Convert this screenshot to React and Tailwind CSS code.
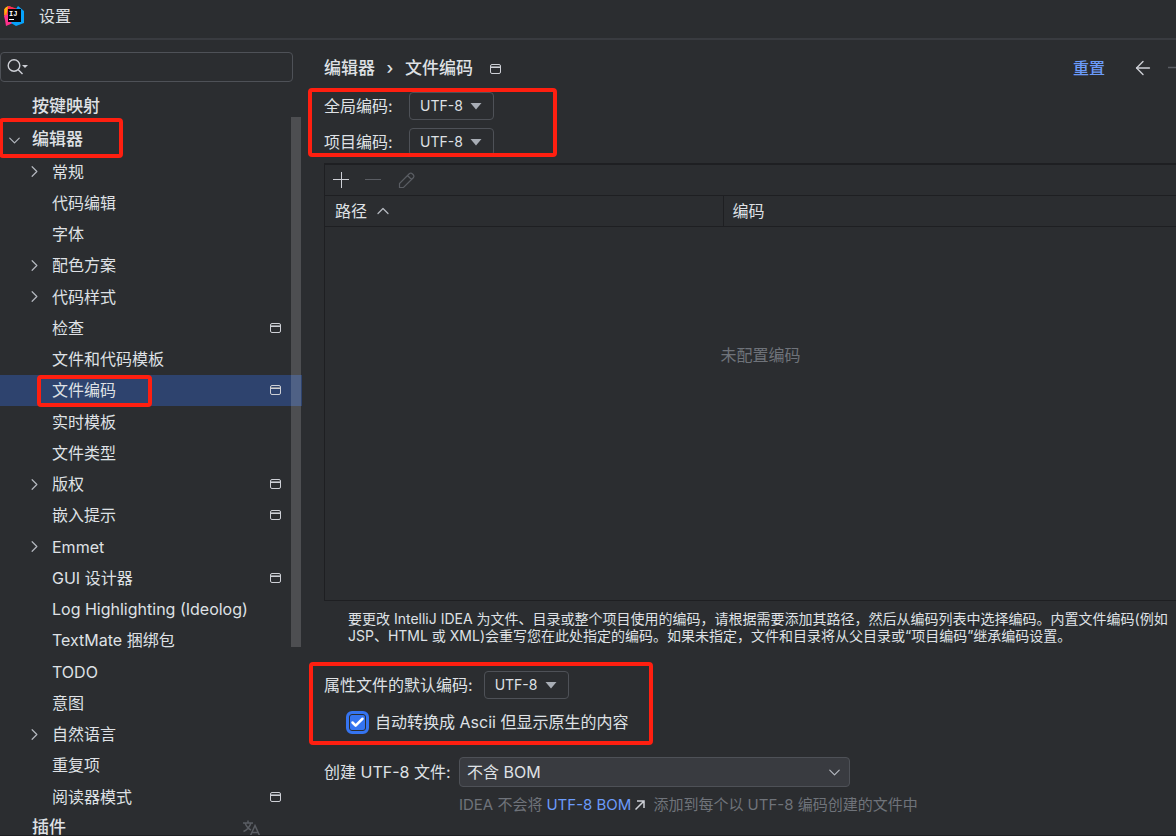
import { ArrowLeft, Check, ChevronDown, ChevronRight, ChevronUp } from 'lucide-react';

const editorItems = [
  { label: '常规', expandable: true },
  { label: '代码编辑' },
  { label: '字体' },
  { label: '配色方案', expandable: true },
  { label: '代码样式', expandable: true },
  { label: '检查', project: true },
  { label: '文件和代码模板' },
  { label: '文件编码', project: true, selected: true },
  { label: '实时模板' },
  { label: '文件类型' },
  { label: '版权', expandable: true, project: true },
  { label: '嵌入提示', project: true },
  { label: 'Emmet', expandable: true },
  { label: 'GUI 设计器', project: true },
  { label: 'Log Highlighting (Ideolog)' },
  { label: 'TextMate 捆绑包' },
  { label: 'TODO' },
  { label: '意图' },
  { label: '自然语言', expandable: true },
  { label: '重复项' },
  { label: '阅读器模式', project: true },
];

function IdeaLogo() {
  return (
    <svg width="20" height="20" viewBox="0 0 20 20" aria-hidden="true">
      <path d="M0 3 5 0 12 3 10 12 3 14 0 9Z" fill="#fc801d" />
      <path d="M4 0 14 3 13 8 4 10 2 5Z" fill="#fe2857" />
      <path d="M0 10 8 6 9 17 2 20 1 14Z" fill="#ff318c" />
      <path d="M12 3 14 0 20 5 20 17 12 20 7 17 13 9Z" fill="#07a2fb" />
      <path d="M1 2 4 0 3 6 1 8Z" fill="#fdb60d" />
      <rect x="4" y="3" width="13" height="13" fill="#070508" />
      <text x="5" y="10" fill="#fff" fontSize="7" fontWeight="700" fontFamily="Liberation Mono, monospace">IJ</text>
      <path d="M5 13.500H10" stroke="#fff" />
    </svg>
  );
}

function ProjectIcon() {
  return (
    <svg className="shrink-0" width="11" height="10" viewBox="0 0 11 10" fill="none" stroke="#ced0d6" aria-hidden="true">
      <rect x="0.5" y="0.5" width="10" height="9" rx="1.500" />
      <path d="M1 2.500H10" stroke="#8c8f94" />
      <path d="M1 3.500H10" />
    </svg>
  );
}

function Highlight({ className }) {
  return <div className={`pointer-events-none absolute z-10 rounded-sm border-4 border-[#ff1f10] ${className}`} />;
}

function TreeItem({ item }) {
  return (
    <li className={`relative flex h-[31px] items-center pl-[25px] pr-[21px] ${item.selected ? 'bg-[#2e436e]' : ''}`}>
      <span className="w-[27px] shrink-0">
        {item.expandable && <ChevronRight className="text-[#b4b8bf]" size={19} strokeWidth={1.5} />}
      </span>
      <a href="#" className="flex-1 whitespace-nowrap">{item.label}</a>
      {item.project && <ProjectIcon />}
      {item.selected && <Highlight className="left-[37px] top-0 h-8 w-[115px]" />}
    </li>
  );
}

function Sidebar() {
  return (
    <aside className="flex w-[302px] shrink-0 flex-col pt-3">
      <label className="mr-[9px] flex h-[30px] items-center rounded-sm border border-[#4e5157] pl-[6px]">
        <svg width="22" height="18" viewBox="0 0 22 18" fill="none" stroke="#ced0d6" strokeWidth="1.400" aria-hidden="true">
          <circle cx="7" cy="7.500" r="5.800" />
          <path d="M11 11.500 15.500 16" />
          <path d="M15 7H21L18 10Z" fill="#ced0d6" stroke="none" />
        </svg>
        <input type="text" aria-label="搜索设置" className="min-w-0 flex-1 bg-transparent outline-none" />
      </label>
      <nav className="relative mt-2 min-h-0 flex-1 overflow-hidden">
        <a href="#" className="flex h-[34px] items-center pl-8 text-[17px] font-medium">按键映射</a>
        <div className="relative flex h-8 items-center pl-[5px] text-[17px] font-medium">
          <ChevronDown className="mr-2 text-[#b4b8bf]" size={19} strokeWidth={1.5} />
          <a href="#">编辑器</a>
          <Highlight className="-left-px -top-[6px] h-10 w-[124px]" />
        </div>
        <ul className="flex h-[656px] flex-col justify-between">
          {editorItems.map((item) => (
            <TreeItem key={item.label} item={item} />
          ))}
        </ul>
        <div className="flex h-8 items-center pl-8 pr-[42px] text-[17px] font-medium">
          <a href="#" className="flex-1">插件</a>
          <svg width="17" height="16" viewBox="0 0 17 16" fill="none" stroke="#5a5d63" strokeWidth="1.500" aria-hidden="true">
            <path d="M0 3H10M5 0.500V3M2 3Q4 8 8 10M8 3Q6 9 0.500 11.500" />
            <path d="M7.500 15.500 12 5.500 16.500 15.500M9 12.500H15" />
          </svg>
        </div>
        <div className="absolute right-px top-[27px] h-[530px] w-[10px] bg-white/16" />
      </nav>
    </aside>
  );
}

function EncodingSelect({ id }) {
  return (
    <span className="relative inline-flex">
      <select id={id} className="h-7 w-[85px] appearance-none rounded-sm border border-[#4e5157] bg-transparent pl-[10px] text-sm">
        <option>UTF-8</option>
      </select>
      <svg className="pointer-events-none absolute right-3 top-[11px]" width="12" height="7" viewBox="0 0 12 7" aria-hidden="true">
        <path d="M0.500 0H11.500L6 6.500Z" fill="#a8adb5" />
      </svg>
    </span>
  );
}

function MappingTable() {
  return (
    <section className="-mr-10 mt-[6px] border-l border-t-2 border-[#1e1f22]">
      <div className="flex h-[30px] items-center gap-4 pl-2">
        <button aria-label="添加">
          <svg width="16" height="16" viewBox="0 0 16 16" stroke="#ced0d6" aria-hidden="true">
            <path d="M0 7.500H16M8.500 0V16" />
          </svg>
        </button>
        <button aria-label="移除" disabled>
          <svg width="16" height="16" viewBox="0 0 16 16" stroke="#5a5d63" aria-hidden="true">
            <path d="M0 7.500H16" />
          </svg>
        </button>
        <button aria-label="编辑" disabled className="ml-px">
          <svg width="17" height="17" viewBox="0 0 17 17" fill="none" stroke="#5a5d63" strokeWidth="1.200" aria-hidden="true">
            <path d="M1.500 15.500V11.500L11.500 1.500Q13 0.500 14.500 2L15 2.500Q16.500 4 15.500 5.500L5.500 15.500ZM9.500 3.500 13.500 7.500" />
          </svg>
        </button>
      </div>
      <table className="w-full table-fixed border-collapse text-left">
        <thead>
          <tr className="h-[31px] border-y border-[#1e1f22]">
            <th className="w-[398px] border-r border-[#1e1f22] pl-[10px] font-normal">
              <span className="flex items-center gap-[6px]">
                路径
                <ChevronUp className="text-[#b4b8bf]" size={20} strokeWidth={1.5} />
              </span>
            </th>
            <th className="pl-[9px] font-normal">编码</th>
          </tr>
        </thead>
        <tbody>
          <tr className="h-[374px] border-b border-[#1e1f22]">
            <td colSpan={2} className="pt-[116px] text-center align-top text-[#6f737a]">未配置编码</td>
          </tr>
        </tbody>
      </table>
    </section>
  );
}

function EncodingPage() {
  return (
    <main className="flex min-w-0 flex-1 flex-col overflow-hidden pl-[22px] pr-5">
      <header className="flex h-12 items-end text-[17px] font-medium">
        <div className="flex h-[38px] flex-1 items-center">
          <a href="#">编辑器</a>
          <span className="w-[30px] text-center">›</span>
          <span className="mr-[17px]">文件编码</span>
          <ProjectIcon />
        </div>
        <div className="-mr-5 flex h-10 items-center">
          <button className="mr-[27px] text-base text-[#6b9bfa]">重置</button>
          <button aria-label="后退" className="mr-[14px]">
            <ArrowLeft className="text-[#ced0d6]" size={22} strokeWidth={1.5} />
          </button>
          <button aria-label="前进" disabled>
            <svg width="8" height="18" viewBox="0 0 8 18" stroke="#5a5d63" strokeWidth="1.500" aria-hidden="true">
              <path d="M0 8.500H8" />
            </svg>
          </button>
        </div>
      </header>

      <div className="relative pt-1">
        <div className="flex h-[65px] flex-col gap-2 overflow-hidden">
          <div className="flex items-center">
            <label htmlFor="global-encoding" className="w-[85px]">全局编码:</label>
            <EncodingSelect id="global-encoding" />
          </div>
          <div className="flex items-center">
            <label htmlFor="project-encoding" className="w-[85px]">项目编码:</label>
            <EncodingSelect id="project-encoding" />
          </div>
        </div>
        <Highlight className="-left-4 top-0 h-[69px] w-[249px]" />
      </div>

      <MappingTable />

      <p className="mt-[9px] whitespace-nowrap pl-6 text-sm leading-[17px]">
        要更改 IntelliJ IDEA 为文件、目录或整个项目使用的编码，请根据需要添加其路径，然后从编码列表中选择编码。内置文件编码(例如
        <br />
        JSP、HTML 或 XML)会重写您在此处指定的编码。如果未指定，文件和目录将从父目录或“项目编码”继承编码设置。
      </p>

      <div className="relative mt-[18px] pb-[11px] pt-[9px]">
        <div className="flex items-center gap-[11px]">
          <label htmlFor="properties-encoding">属性文件的默认编码:</label>
          <EncodingSelect id="properties-encoding" />
        </div>
        <label className="ml-[22px] mt-[11px] flex h-6 items-center gap-[6px]">
          <span className="relative flex">
            <input
              type="checkbox"
              defaultChecked
              className="size-[23px] appearance-none rounded-md border-3 border-[#3574f0] bg-[#3574f0] inset-ring inset-ring-[#2b2d30]"
            />
            <Check className="pointer-events-none absolute left-1 top-1 text-white" size={15} strokeWidth={4} />
          </span>
          自动转换成 Ascii 但显示原生的内容
        </label>
        <Highlight className="-left-[15px] top-0 h-[83px] w-[344px]" />
      </div>

      <div className="mt-3 grid grid-cols-[127px_391px] items-center gap-x-2">
        <label htmlFor="bom" className="whitespace-nowrap">创建 UTF-8 文件:</label>
        <span className="relative flex">
          <select id="bom" className="h-[30px] w-full appearance-none rounded-sm border border-[#4e5157] bg-[#393b40] pl-[7px]">
            <option>不含 BOM</option>
          </select>
          <ChevronDown className="pointer-events-none absolute right-[6px] top-[6px] text-[#b4b8bf]" size={19} strokeWidth={1.5} />
        </span>
        <p className="col-start-2 mt-2 flex items-center whitespace-nowrap text-[15px] leading-5 text-[#6f737a]">
          <span>IDEA 不会将</span>
          <a href="#" className="ml-1 flex items-center gap-1 text-[#6b9bfa]">
            UTF-8 BOM
            <svg width="10" height="10" viewBox="0 0 10 10" fill="none" stroke="#ced0d6" strokeWidth="1.500" aria-hidden="true">
              <path d="M0.500 9.500 9 1M2 1H9V8" />
            </svg>
          </a>
          <span className="ml-2">添加到每个以 UTF-8 编码创建的文件中</span>
        </p>
      </div>
    </main>
  );
}

export default function App() {
  return (
    <div
      lang="zh-CN"
      className="flex h-screen flex-col overflow-hidden border-b border-[#1e1f22] bg-[#2b2d30] font-['Inter','Noto_Sans_CJK_SC',sans-serif] text-base text-[#dfe1e5]"
    >
      <div className="flex h-10 shrink-0 items-center gap-[15px] border-b-2 border-[#393b40] pb-[6px] pl-1">
        <IdeaLogo />
        <h1>设置</h1>
      </div>
      <div className="flex min-h-0 flex-1">
        <Sidebar />
        <EncodingPage />
      </div>
    </div>
  );
}
